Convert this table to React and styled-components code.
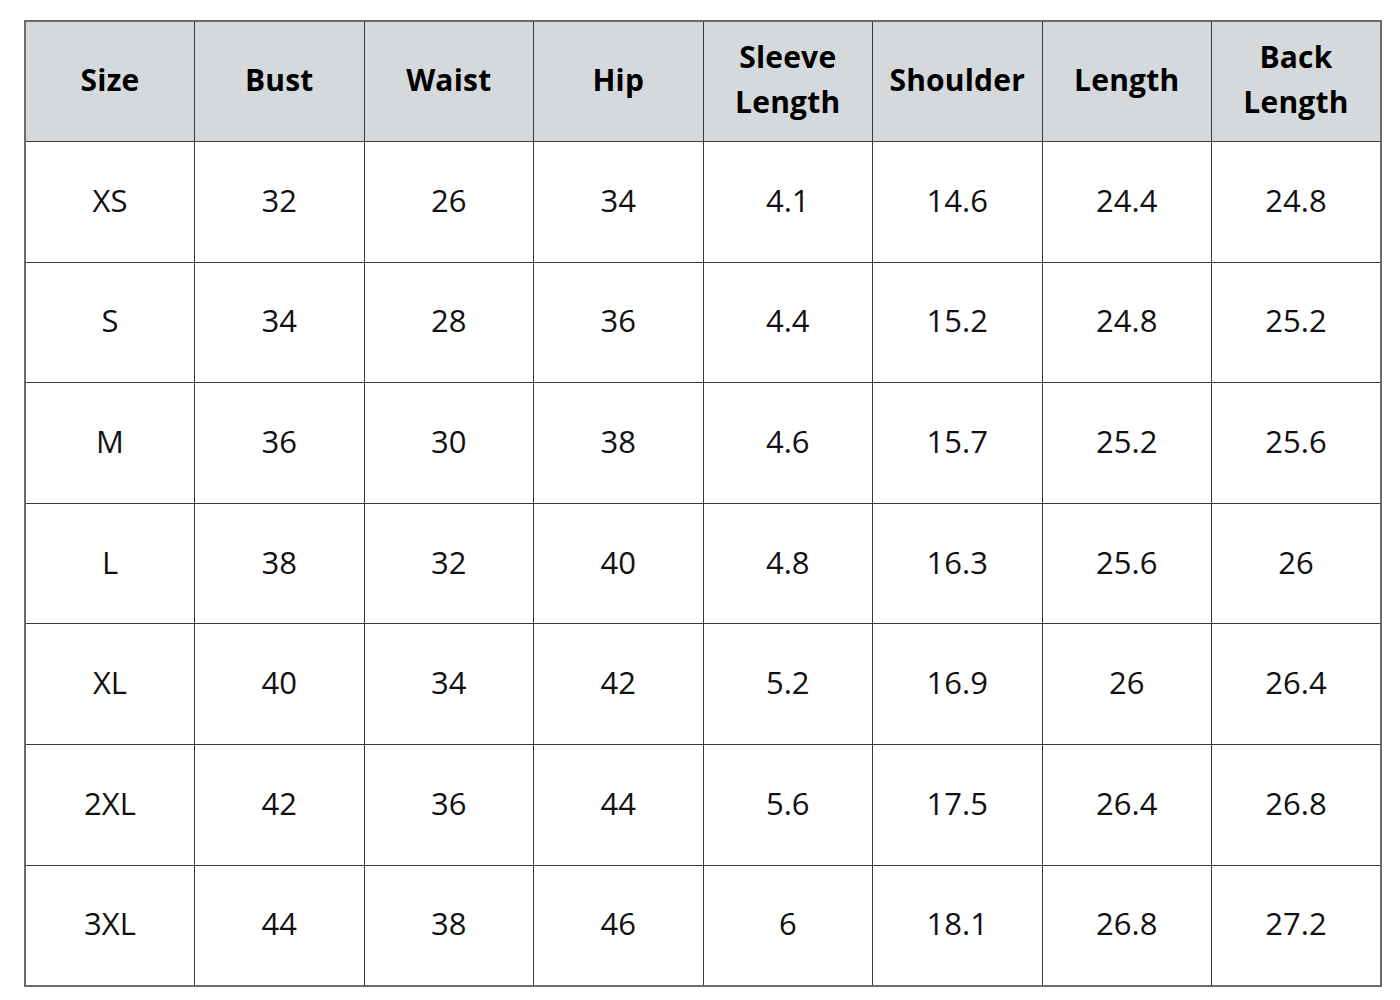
import styled, { createGlobalStyle } from 'styled-components'

const GlobalStyle = createGlobalStyle`
    html, body {
        margin: 0;
        background: #ffffff;
    }
    body {
        font-family: "Open Sans", "Liberation Sans", sans-serif;
        color: #000;
    }
`

const Page = styled.div`
    padding: 20px 19px 14px 24px;
`

const Table = styled.table`
    width: 1358px;
    border-collapse: collapse;
    table-layout: fixed;
    border: 2px solid #6b6b6b;
`

const HeadCell = styled.th`
    height: 114px;
    background: #d5d9db;
    border: 1px solid #3a3a3a;
    font-weight: 700;
    font-size: 30px;
    line-height: 45px;
    text-align: center;
    padding: 0 4px 5px;
    letter-spacing: 0.2px;
`

const Cell = styled.td`
    height: 115.6px;
    border: 1px solid #3a3a3a;
    font-size: 31px;
    font-weight: 400;
    text-align: center;
    padding: 0 0 4px;
    color: #111;
`

const headers = ['Size', 'Bust', 'Waist', 'Hip', ['Sleeve', 'Length'], 'Shoulder', 'Length', ['Back', 'Length']]

const rows = [
    ['XS', '32', '26', '34', '4.1', '14.6', '24.4', '24.8'],
    ['S', '34', '28', '36', '4.4', '15.2', '24.8', '25.2'],
    ['M', '36', '30', '38', '4.6', '15.7', '25.2', '25.6'],
    ['L', '38', '32', '40', '4.8', '16.3', '25.6', '26'],
    ['XL', '40', '34', '42', '5.2', '16.9', '26', '26.4'],
    ['2XL', '42', '36', '44', '5.6', '17.5', '26.4', '26.8'],
    ['3XL', '44', '38', '46', '6', '18.1', '26.8', '27.2'],
]

export default function App() {
    return (
        <Page>
            <GlobalStyle />
            <Table>
                <thead>
                    <tr>
                        {headers.map((h, i) => (
                            <HeadCell key={i}>
                                {Array.isArray(h) ? <>{h[0]}<br />{h[1]}</> : h}
                            </HeadCell>
                        ))}
                    </tr>
                </thead>
                <tbody>
                    {rows.map(row => (
                        <tr key={row[0]}>
                            {row.map((v, i) => <Cell key={i}>{v}</Cell>)}
                        </tr>
                    ))}
                </tbody>
            </Table>
        </Page>
    )
}
